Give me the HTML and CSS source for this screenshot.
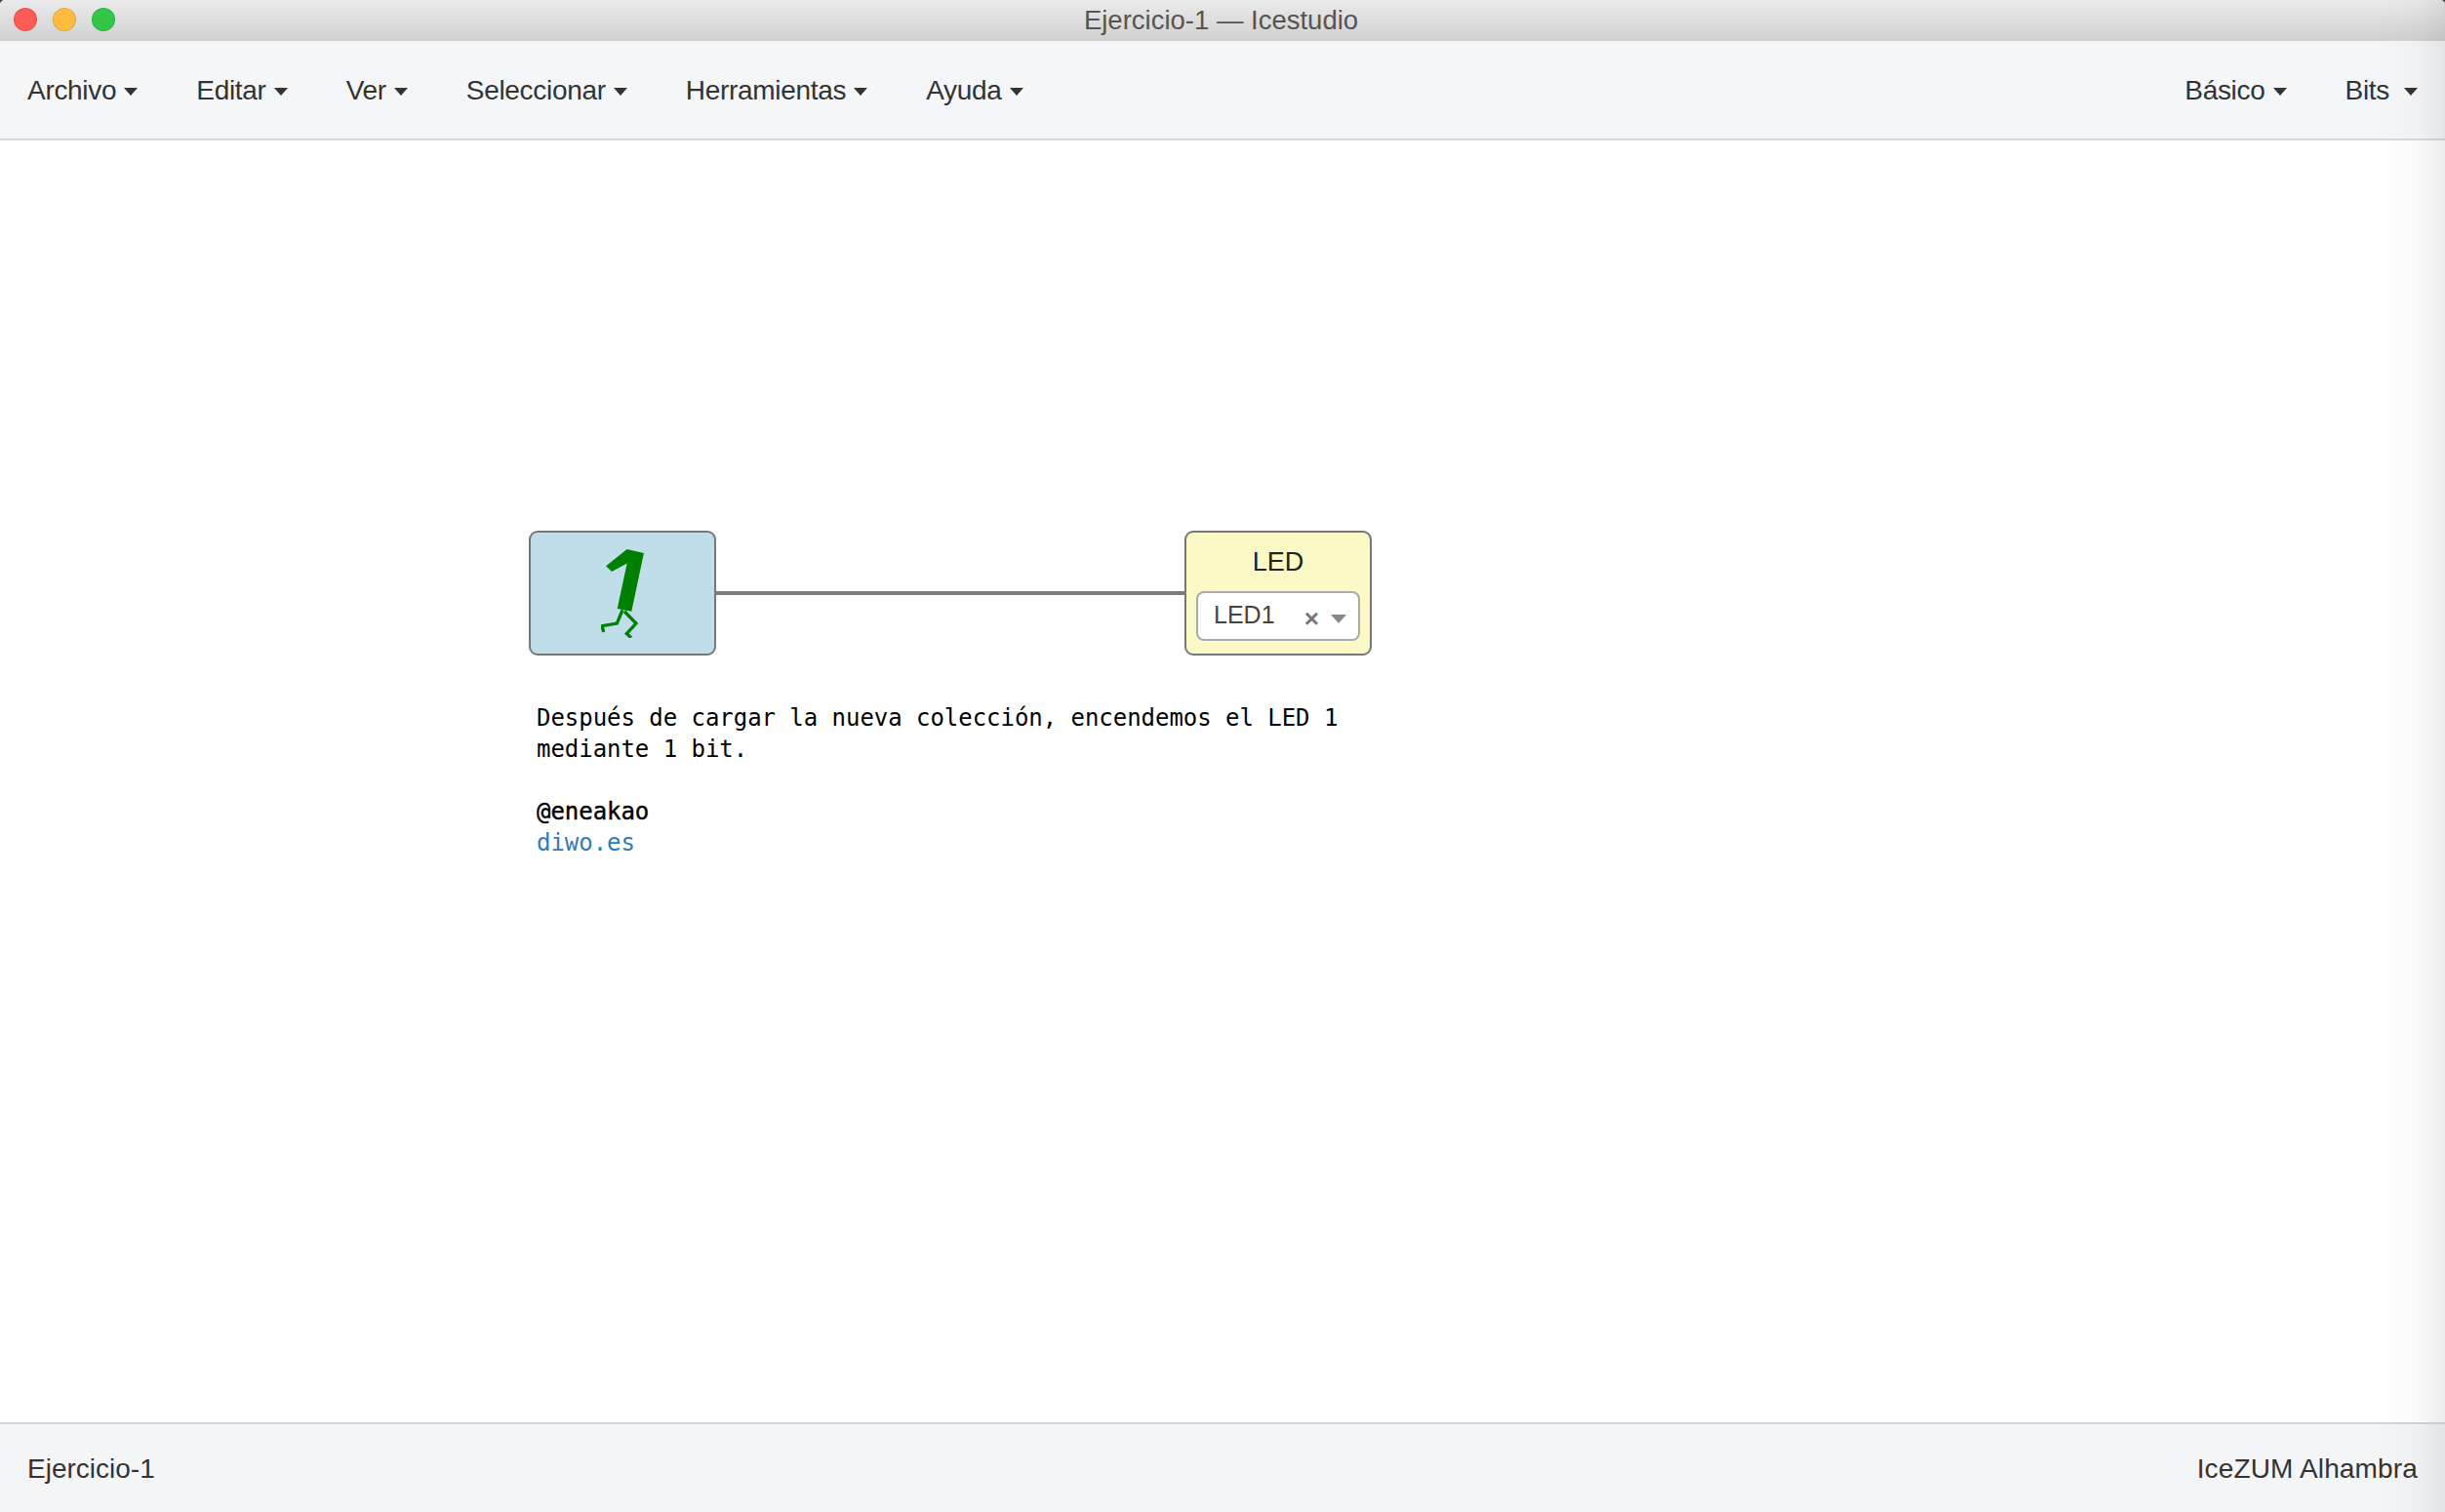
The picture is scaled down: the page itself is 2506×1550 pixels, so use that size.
FILE: index.html
```html
<!DOCTYPE html>
<html lang="es">

<head>
    <meta charset="UTF-8">
    <title>Ejercicio-1 — Icestudio</title>
    <link rel="stylesheet" href="styles.css">
</head>

<body>
    <div class="window">
        <div class="titlebar">
            <div class="lights">
                <span class="light red"></span>
                <span class="light yellow"></span>
                <span class="light green"></span>
            </div>
            <span class="title">Ejercicio-1 — Icestudio</span>
        </div>

        <nav class="navbar">
            <ul class="menu">
                <li class="menu-item">Archivo<span class="caret"></span></li>
                <li class="menu-item">Editar<span class="caret"></span></li>
                <li class="menu-item">Ver<span class="caret"></span></li>
                <li class="menu-item">Seleccionar<span class="caret"></span></li>
                <li class="menu-item">Herramientas<span class="caret"></span></li>
                <li class="menu-item">Ayuda<span class="caret"></span></li>
            </ul>
            <ul class="menu">
                <li class="menu-item">Básico<span class="caret"></span></li>
                <li class="menu-item">Bits<span class="caret wide"></span></li>
            </ul>
        </nav>

        <main class="canvas">
            <div class="wire"></div>

            <div class="block block-bit">
                <svg class="bit-icon" viewBox="288 96 132 274" width="44" height="91">
                    <polygon fill="#008000" points="368,96 420,108 382,288 338,280 368,140 321,165 303,148"/>
                    <polyline fill="none" stroke="#008000" stroke-width="10" points="354,284 337,325 291,333 296,352"/>
                    <polyline fill="none" stroke="#008000" stroke-width="10" points="360,288 396,325 367,357 381,369"/>
                </svg>
            </div>

            <div class="block block-led">
                <div class="led-name">LED</div>
                <div class="led-select">
                    <span class="led-value">LED1</span>
                    <span class="led-clear">×</span>
                    <span class="led-arrow"></span>
                </div>
            </div>

            <div class="note">
                <p>Después de cargar la nueva colección, encendemos el LED 1</p>
                <p>mediante 1 bit.</p>
                <p class="note-gap"><strong>@eneakao</strong></p>
                <p><a class="note-link" href="#">diwo.es</a></p>
            </div>
        </main>

        <footer class="footer">
            <span>Ejercicio-1</span>
            <span class="footer-board">IceZUM Alhambra</span>
        </footer>

        <div class="edge-shade"></div>
    </div>
</body>
</html>
```

FILE: styles.css
```css
* {
    margin: 0;
    padding: 0;
    box-sizing: border-box;
}

html {
    background: #444;
}

body {
    width: 2506px;
    height: 1550px;
    overflow: hidden;
    font-family: "Liberation Sans", Arial, sans-serif;
    color: #333;
}

.window {
    position: relative;
    display: flex;
    flex-direction: column;
    height: 100%;
    background: #fff;
    border-radius: 5px 5px 0 0;
    overflow: hidden;
}

.titlebar {
    position: relative;
    display: flex;
    align-items: center;
    justify-content: center;
    height: 42px;
    flex: none;
    padding-right: 3px;
    background: linear-gradient(#ebebeb, #d0d0d0);
}

.lights {
    position: absolute;
    top: 8px;
    left: 14px;
    display: flex;
    gap: 16px;
}

.light {
    width: 24px;
    height: 24px;
    border-radius: 50%;
    border: 1px solid rgba(0, 0, 0, .1);
}

.red {
    background: #fc5b57;
}

.yellow {
    background: #fdbc40;
}

.green {
    background: #33c748;
}

.title {
    font-size: 27.5px;
    color: #555;
}

.navbar {
    display: flex;
    justify-content: space-between;
    align-items: center;
    height: 102px;
    flex: none;
    padding: 2px 28px 0 28px;
    background: #f5f6f8;
    border-bottom: 2px solid #d5dcdc;
    font-size: 28px;
    letter-spacing: -.3px;
}

.menu {
    display: flex;
    gap: 60px;
    list-style: none;
}

.menu-item {
    display: flex;
    align-items: center;
}

.caret {
    width: 0;
    height: 0;
    margin-left: 8px;
    margin-top: 2px;
    border-top: 8px solid #333;
    border-left: 7.5px solid transparent;
    border-right: 7.5px solid transparent;
}

.caret.wide {
    margin-left: 15px;
}

.canvas {
    position: relative;
    flex: 1;
}

.wire {
    position: absolute;
    top: 462px;
    left: 734px;
    width: 480px;
    height: 4px;
    background: #7d7d7d;
}

.block {
    position: absolute;
    top: 400px;
    width: 192px;
    height: 128px;
    border: 2px solid #777;
    border-radius: 9px;
}

.block-bit {
    left: 542px;
    display: flex;
    align-items: center;
    justify-content: center;
    background: #c0dee9;
}

.block-led {
    left: 1214px;
    padding: 0 10px;
    background: #fbf9c6;
    text-align: center;
}

.led-name {
    height: 60px;
    line-height: 60px;
    font-size: 27px;
    color: #222;
}

.led-select {
    display: flex;
    align-items: center;
    height: 51px;
    padding: 0 12px 0 16px;
    background: #fff;
    border: 2px solid #aaa;
    border-radius: 8px;
    font-size: 25px;
    color: #444;
}

.led-value {
    flex: 1;
    margin-top: -3px;
    text-align: left;
}

.led-clear {
    margin-top: 5px;
    margin-right: 12px;
    font-size: 26px;
    font-weight: bold;
    color: #777;
}

.led-arrow {
    width: 0;
    height: 0;
    margin-top: 6px;
    border-top: 9px solid #888;
    border-left: 8px solid transparent;
    border-right: 8px solid transparent;
}

.note {
    position: absolute;
    top: 576px;
    left: 550px;
    font-family: "DejaVu Sans Mono", monospace;
    font-size: 24px;
    line-height: 32px;
    letter-spacing: -.04px;
    color: #000;
    white-space: nowrap;
}

.note-gap {
    margin-top: 32px;
}

.note strong {
    font-weight: normal;
    -webkit-text-stroke: .4px #000;
}

.note-link {
    color: #337ab7;
    text-decoration: none;
}

.footer {
    display: flex;
    justify-content: space-between;
    align-items: center;
    height: 92px;
    flex: none;
    padding: 2px 28px 0 28px;
    background: #f4f5f7;
    border-top: 2px solid #d3d8db;
    font-size: 28px;
}

.footer-board {
    letter-spacing: .15px;
}

.edge-shade {
    position: absolute;
    top: 0;
    right: 0;
    bottom: 0;
    width: 70px;
    background: linear-gradient(to right, rgba(0, 0, 0, 0), rgba(0, 0, 0, .02) 60%, rgba(0, 0, 0, .07));
    pointer-events: none;
}
```
